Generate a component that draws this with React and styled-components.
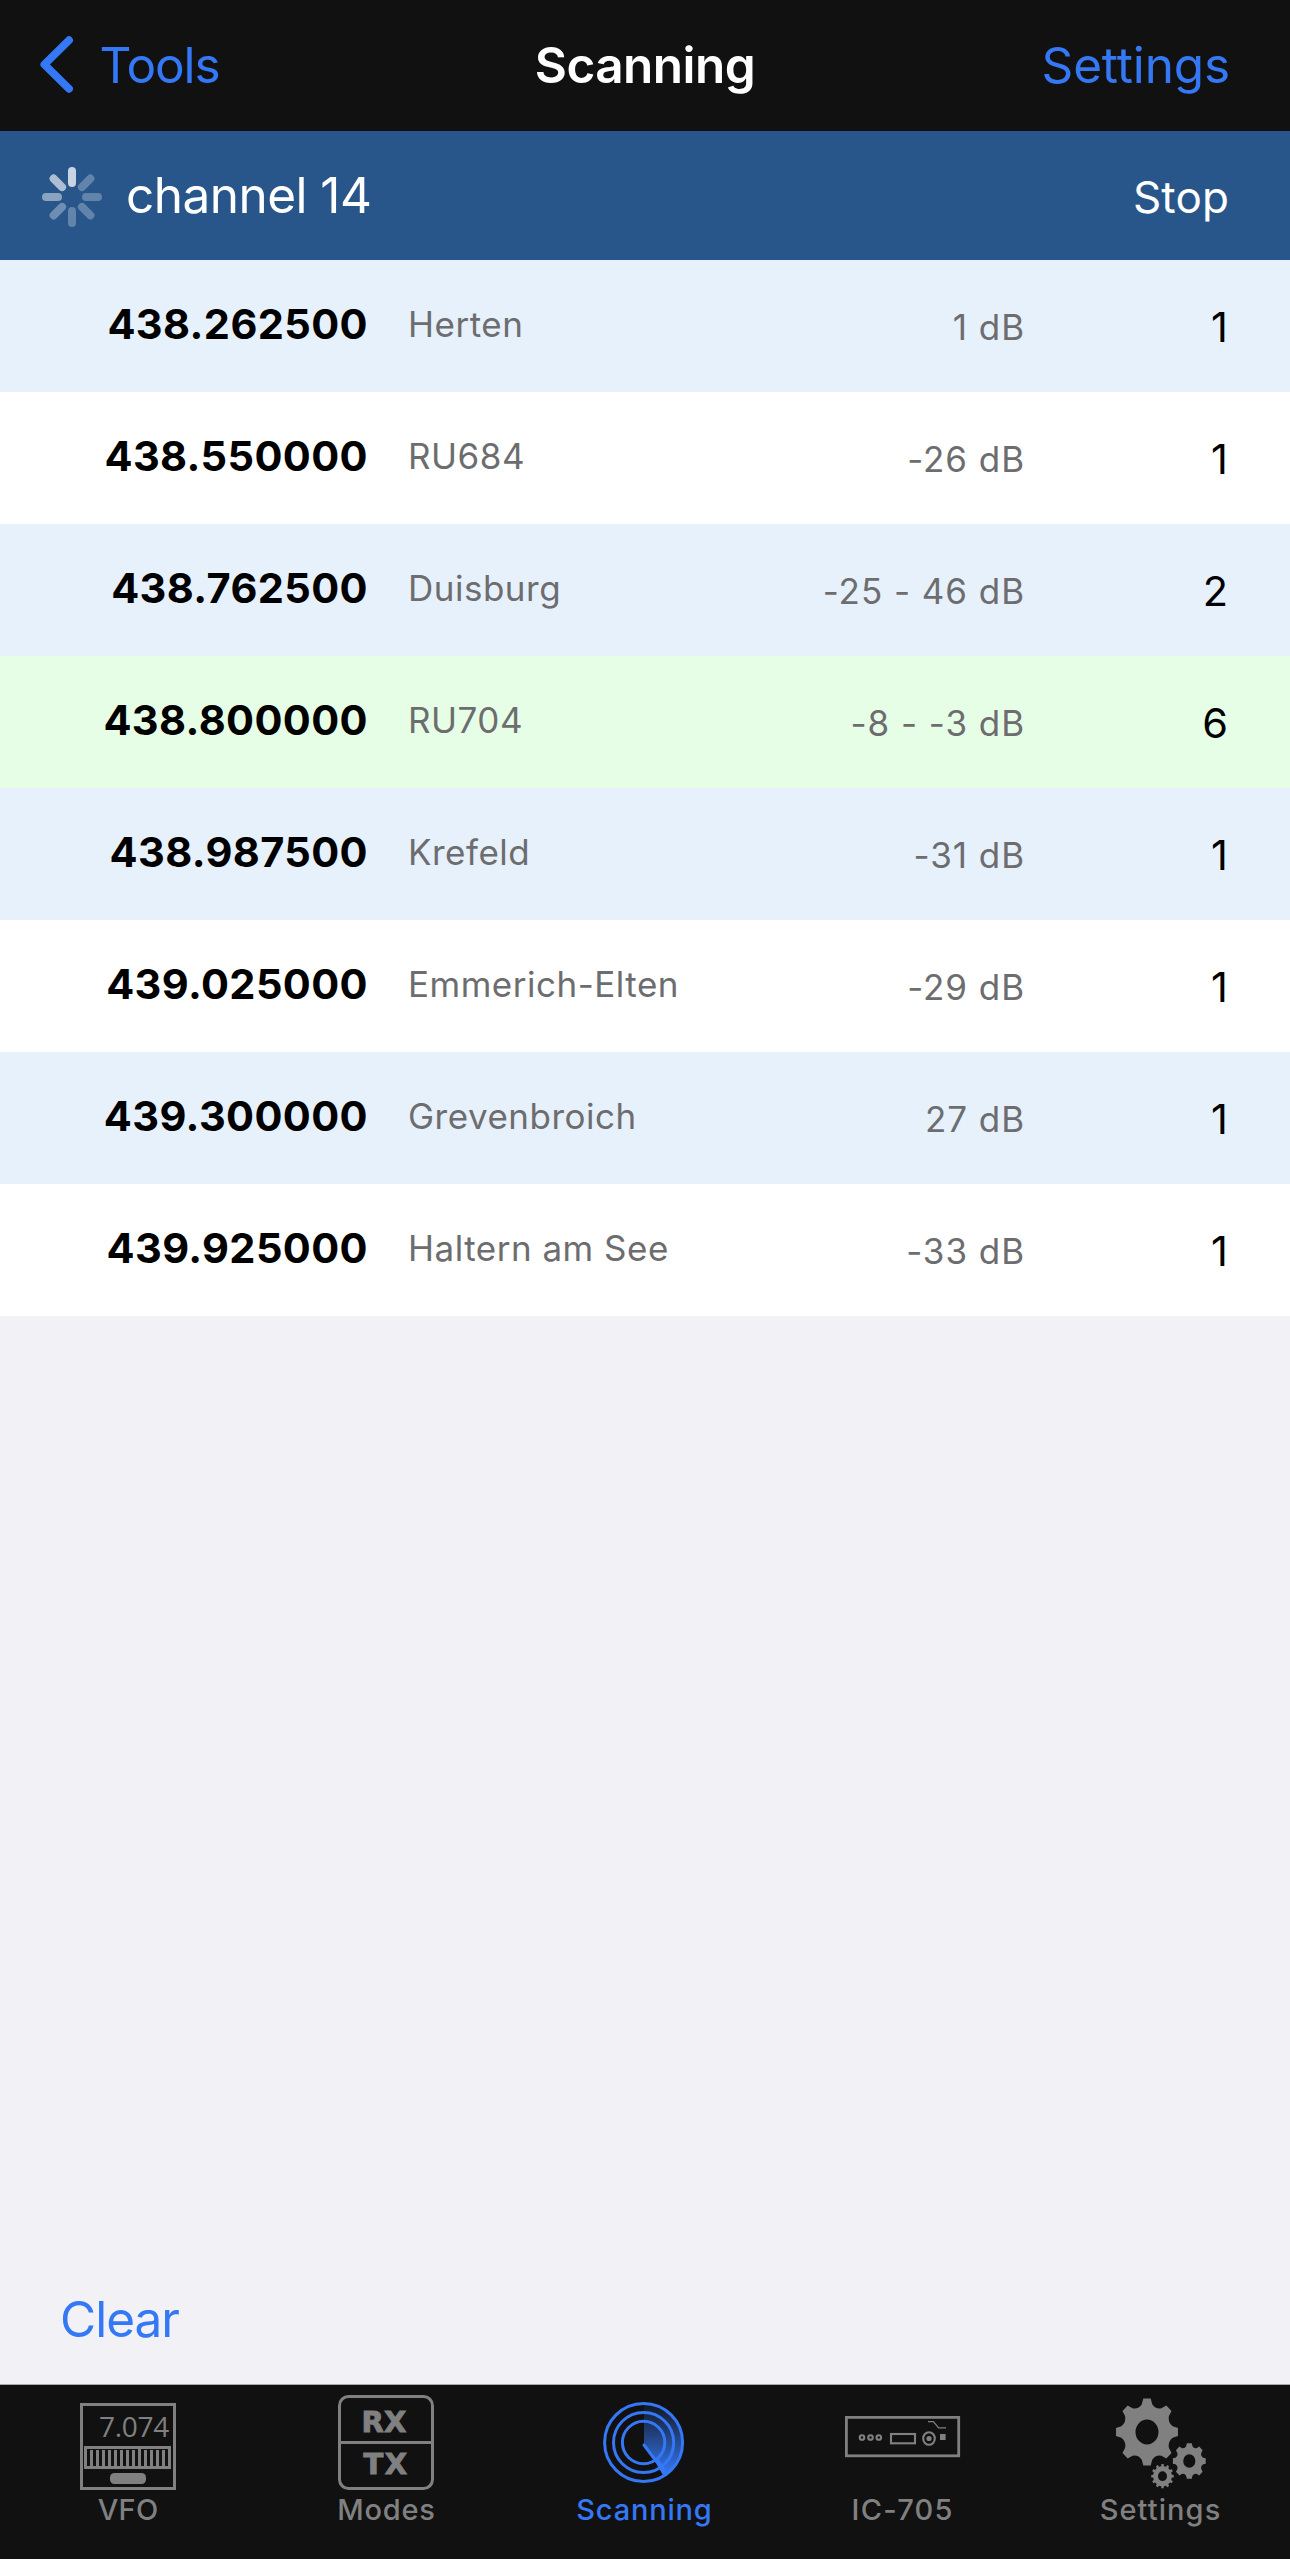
import React from 'react';
import styled, { createGlobalStyle } from 'styled-components';

const Base = createGlobalStyle`
  *, *::before, *::after { box-sizing: border-box; }
  body { margin: 0; background: #f1f1f6; }
  button { appearance: none; border: 0; margin: 0; padding: 0; background: none; font: inherit; color: inherit; }
`;

const Screen = styled.div`
  width: 1290px;
  height: 2559px;
  display: flex;
  flex-direction: column;
  background: #f1f1f6;
  color: #000;
  font-family: Inter, "Liberation Sans", sans-serif;
  white-space: nowrap;
`;

const NavBar = styled.header`
  flex: none;
  height: 131px;
  display: grid;
  grid-template-columns: 1fr auto 1fr;
  align-items: center;
  padding: 0 60px 1px 36px;
  background: #111;
`;

const BackButton = styled.button`
  justify-self: start;
  display: flex;
  align-items: center;
  gap: 20.5px;
`;

const Title = styled.h1`
  margin: 0;
  padding-left: 24px;
  font-size: 49.5px;
  font-weight: 600;
  line-height: 60px;
  letter-spacing: -0.54px;
  color: #fff;
`;

const LinkText = styled.span`
  display: block;
  font-size: 49.5px;
  line-height: 60px;
  letter-spacing: ${(p) => p.$tracking ?? 0}px;
  color: #3478f6;
`;

const NavAction = styled.button`
  justify-self: end;
`;

const StatusBar = styled.section`
  flex: none;
  height: 129px;
  display: flex;
  align-items: center;
  padding: 0 61px 1px 41px;
  background: #28568b;
  color: #fff;

  svg { margin-top: 4px; }
`;

const StatusText = styled.span`
  flex: 1;
  margin-left: 23px;
  font-size: 49.5px;
  line-height: 60px;
  letter-spacing: -0.53px;
`;

const StopButton = styled.button`
  padding-top: 4px;
  font-size: 44px;
  line-height: 54px;
  letter-spacing: 0.14px;
`;

const List = styled.ul`
  flex: none;
  margin: 0;
  padding: 0;
  list-style: none;
`;

const tones = { tinted: '#e7f1fc', plain: '#fff', active: '#e7fee6' };

const Row = styled.li`
  height: 132px;
  display: grid;
  grid-template-columns: 368px 1fr 320px 203px;
  align-items: center;
  padding-right: 62px;
  background: ${(p) => tones[p.$tone]};
`;

const Frequency = styled.strong`
  padding-bottom: 4px;
  font-size: 41.5px;
  font-weight: 700;
  line-height: 50px;
  letter-spacing: 0.4px;
  text-align: right;
`;

const Station = styled.span`
  padding: 0 0 4px 40px;
  font-size: 35px;
  line-height: 44px;
  letter-spacing: 0.5px;
  color: #6d6d6f;
`;

const Level = styled.span`
  padding-top: 2px;
  font-size: 35px;
  line-height: 44px;
  letter-spacing: 0.95px;
  text-align: right;
  color: #6d6d6f;
`;

const Count = styled.span`
  padding-top: 2px;
  font-size: 41.5px;
  line-height: 50px;
  text-align: right;
`;

const Filler = styled.div`
  flex: 1;
`;

const Footer = styled.div`
  flex: none;
  height: 131px;
  display: flex;
  align-items: center;
  padding: 1px 0 0 60px;
`;

const TabBar = styled.nav`
  flex: none;
  height: 175px;
  display: grid;
  grid-template-columns: repeat(5, 258px);
  border-top: 1px solid #a9a9ad;
  background: #111;
`;

const Tab = styled.button`
  display: flex;
  flex-direction: column;
  align-items: center;
  justify-content: flex-start;
  padding-right: 2px;
  color: ${(p) => (p.$active ? '#3478f6' : '#808080')};

  svg { display: block; flex: none; }
`;

const TabLabel = styled.span`
  font-size: 29px;
  font-weight: 500;
  line-height: 39px;
  letter-spacing: ${(p) => p.$tracking}px;
  margin-right: -${(p) => p.$tracking}px;
`;

const BackChevron = () => (
  <svg width="43" height="66" viewBox="0 0 43 66" fill="none">
    <path d="M33 8.2 8.4 32.5 33 56.8" stroke="#3478f6" strokeWidth="7.8" strokeLinecap="round" strokeLinejoin="round" />
  </svg>
);

const spokes = [0.75, 0.27, 0.27, 0.27, 0.27, 0.33, 0.46, 0.62];

const Spinner = () => (
  <svg width="62" height="62" viewBox="-31 -31 62 62">
    {spokes.map((opacity, i) => (
      <rect key={i} x="-4" y="-30" width="8" height="20" rx="4" fill="#fff" opacity={opacity} transform={`rotate(${i * 45})`} />
    ))}
  </svg>
);

const IconFrame = ({ children }) => (
  <svg width="120" height="105" viewBox="0 0 120 105" fill="none" stroke="currentColor" strokeWidth="3">
    {children}
  </svg>
);

const VfoIcon = () => (
  <IconFrame>
    <rect x="13.5" y="19.5" width="93" height="84" />
    <text x="31" y="51.7" fill="currentColor" stroke="none" fontFamily="Open Sans" fontSize="28" letterSpacing="-0.3">7.074</text>
    <rect x="17.5" y="62.5" width="84" height="20" />
    {Array.from({ length: 13 }, (_, i) => (
      <path key={i} d={`M${23.5 + i * 6} ${i === 8 ? 62 : 65}V81`} />
    ))}
    <rect x="42" y="88" width="36" height="11" rx="4.5" fill="currentColor" stroke="none" />
  </IconFrame>
);

const ModesIcon = () => (
  <IconFrame>
    <rect x="13.5" y="11.5" width="93" height="92" rx="9" />
    <path d="M13 57.5H107" />
    <g fill="currentColor" strokeWidth="1" fontFamily="DejaVu Sans" fontSize="29" fontWeight="700">
      <text x="35.6" y="46.6" letterSpacing="0">RX</text>
      <text x="37.6" y="88.6" letterSpacing="1.4">TX</text>
    </g>
  </IconFrame>
);

const RadarIcon = () => (
  <IconFrame>
    <defs>
      <linearGradient id="sweep" x1="0" y1="18" x2="0" y2="90" gradientUnits="userSpaceOnUse">
        <stop offset="0" stopColor="#3478f6" stopOpacity="0.05" />
        <stop offset="1" stopColor="#3478f6" stopOpacity="1" />
      </linearGradient>
    </defs>
    <path d="M60 18.5A39 39 0 0 1 81 90L60 60Z" fill="url(#sweep)" stroke="none" />
    <circle cx="59.6" cy="57.5" r="39" />
    <circle cx="59.6" cy="57.5" r="30.1" />
    <circle cx="59.6" cy="57.5" r="21.2" />
    <path d="M60 60 72 76" strokeLinecap="round" />
    <path d="M70 75 73.5 72 83.5 87.5 79.5 91Z" fill="currentColor" stroke="none" />
  </IconFrame>
);

const TransceiverIcon = () => (
  <IconFrame>
    <rect x="4.4" y="32.4" width="112.3" height="38.4" strokeWidth="2.8" />
    <g strokeWidth="2.1">
      <circle cx="20" cy="52.5" r="2.3" />
      <circle cx="28.5" cy="52.5" r="2.3" />
      <circle cx="36.8" cy="52.5" r="2.3" />
      <rect x="49" y="49" width="24" height="9.3" />
      <ellipse cx="87" cy="53.5" rx="5.8" ry="6.3" />
    </g>
    <circle cx="87" cy="53.5" r="2.6" fill="currentColor" stroke="none" />
    <rect x="98" y="49" width="5.6" height="6" fill="currentColor" stroke="none" />
    <path d="M86 36.7H91.4L96.6 42.8H104" strokeWidth="1.3" />
  </IconFrame>
);

/* Outline of a cog: tapered teeth joined by rounded valleys, with a punched hub. */
function cogPath({ cx, cy, rx, ry, hx, hy, teeth, tip, base, root, valley }) {
  const at = (deg, r) => {
    const a = (deg * Math.PI) / 180;
    return `${(cx + Math.sin(a) * rx * r).toFixed(2)} ${(cy - Math.cos(a) * ry * r).toFixed(2)}`;
  };
  const step = 360 / teeth;
  let d = '';
  for (let i = 0; i < teeth; i += 1) {
    const a = i * step;
    d += `${i ? 'L' : 'M'}${at(a - base, root)}L${at(a - tip, 1)}L${at(a + tip, 1)}L${at(a + base, root)}`;
    d += `Q${at(a + step / 2, valley)} ${at(a + step - base, root)}`;
  }
  return `${d}ZM${cx - hx} ${cy}a${hx} ${hy} 0 1 0 ${hx * 2} 0a${hx} ${hy} 0 1 0 ${-hx * 2} 0Z`;
}

const cogs = [
  { cx: 47, cy: 47, rx: 31.2, ry: 33.8, hx: 11.5, hy: 12.5, teeth: 8, tip: 6.8, base: 11.5, root: 0.84, valley: 0.72 },
  { cx: 89.3, cy: 76, rx: 16.6, ry: 18, hx: 6.1, hy: 6.7, teeth: 8, tip: 8.5, base: 12.5, root: 0.86, valley: 0.72 },
  { cx: 62.5, cy: 91.2, rx: 11.3, ry: 12.2, hx: 4.5, hy: 4.9, teeth: 12, tip: 5.8, base: 7.5, root: 0.84, valley: 0.8 },
];

const CogsIcon = () => (
  <IconFrame>
    {cogs.map((cog) => (
      <path key={cog.cx} d={cogPath(cog)} fill="currentColor" fillRule="evenodd" stroke="none" />
    ))}
  </IconFrame>
);

const rows = [
  ['438.262500', 'Herten', '1 dB', 1, 'tinted'],
  ['438.550000', 'RU684', '-26 dB', 1, 'plain'],
  ['438.762500', 'Duisburg', '-25 - 46 dB', 2, 'tinted'],
  ['438.800000', 'RU704', '-8 - -3 dB', 6, 'active'],
  ['438.987500', 'Krefeld', '-31 dB', 1, 'tinted'],
  ['439.025000', 'Emmerich-Elten', '-29 dB', 1, 'plain'],
  ['439.300000', 'Grevenbroich', '27 dB', 1, 'tinted'],
  ['439.925000', 'Haltern am See', '-33 dB', 1, 'plain'],
];

const tabs = [
  { label: 'VFO', Icon: VfoIcon, tracking: 0.3 },
  { label: 'Modes', Icon: ModesIcon, tracking: 0.76 },
  { label: 'Scanning', Icon: RadarIcon, tracking: 0.8, active: true },
  { label: 'IC-705', Icon: TransceiverIcon, tracking: 1.26 },
  { label: 'Settings', Icon: CogsIcon, tracking: 1.08 },
];

export default function App() {
  return (
    <Screen>
      <Base />
      <NavBar>
        <BackButton>
          <BackChevron />
          <LinkText $tracking={-1.11}>Tools</LinkText>
        </BackButton>
        <Title>Scanning</Title>
        <NavAction>
          <LinkText $tracking={-0.13}>Settings</LinkText>
        </NavAction>
      </NavBar>
      <StatusBar>
        <Spinner />
        <StatusText>channel 14</StatusText>
        <StopButton>Stop</StopButton>
      </StatusBar>
      <List>
        {rows.map(([frequency, station, level, count, tone]) => (
          <Row key={frequency} $tone={tone}>
            <Frequency>{frequency}</Frequency>
            <Station>{station}</Station>
            <Level>{level}</Level>
            <Count>{count}</Count>
          </Row>
        ))}
      </List>
      <Filler />
      <Footer>
        <button>
          <LinkText $tracking={-1}>Clear</LinkText>
        </button>
      </Footer>
      <TabBar>
        {tabs.map(({ label, Icon, tracking, active }) => (
          <Tab key={label} $active={active}>
            <Icon />
            <TabLabel $tracking={tracking}>{label}</TabLabel>
          </Tab>
        ))}
      </TabBar>
    </Screen>
  );
}
